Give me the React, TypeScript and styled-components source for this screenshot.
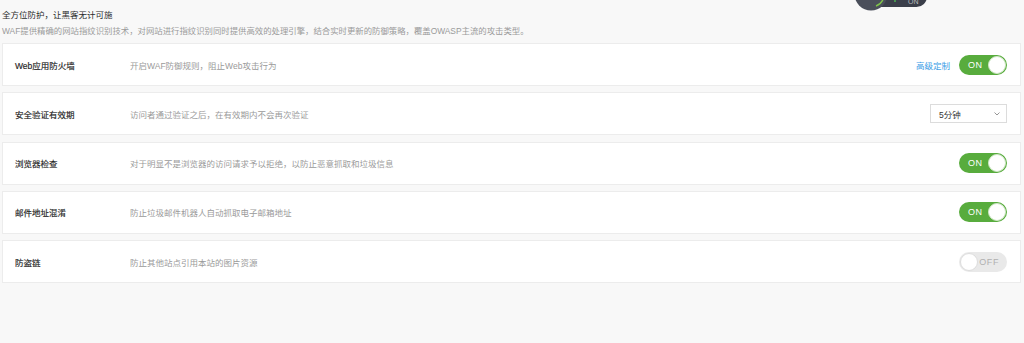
import React from 'react';
import styled, {createGlobalStyle} from 'styled-components';

const colors = {
    page: '#f8f8f8',
    card: '#ffffff',
    cardBorder: '#ececec',
    title: '#333333',
    muted: '#9a9a9a',
    link: '#3b9de6',
    green: '#58ac3d',
    offTrack: '#e9e9e9',
    offText: '#b0b0b0',
};

const GlobalStyle = createGlobalStyle`
  html, body {
    margin: 0;
    padding: 0;
    background: ${colors.page};
  }
  body {
    font-family: "Liberation Sans", "Noto Sans CJK SC", sans-serif;
    color: ${colors.title};
  }
`;

interface Rule {
    name: string
    desc: string
    control: 'toggle' | 'select'
    on?: boolean
    link?: string
    value?: string
}

const rules: Rule[] = [
    {name: 'Web应用防火墙', desc: '开启WAF防御规则，阻止Web攻击行为', control: 'toggle', on: true, link: '高级定制'},
    {name: '安全验证有效期', desc: '访问者通过验证之后，在有效期内不会再次验证', control: 'select', value: '5分钟'},
    {name: '浏览器检查', desc: '对于明显不是浏览器的访问请求予以拒绝，以防止恶意抓取和垃圾信息', control: 'toggle', on: true},
    {name: '邮件地址混淆', desc: '防止垃圾邮件机器人自动抓取电子邮箱地址', control: 'toggle', on: true},
    {name: '防盗链', desc: '防止其他站点引用本站的图片资源', control: 'toggle', on: false},
];

// cut-off illustration peeking in at the top edge
const Knob: React.FC = () => (
    <KnobArt width="90" height="12" viewBox="0 0 90 12">
        <rect x="20" y="-14" width="62" height="21" rx="10.5" fill="#3b3f4a"/>
        <circle cx="26" cy="-6" r="16.5" fill="#4a4e5a"/>
        <path d="M39 -6 A13 13 0 0 1 31 6" stroke="#7fc24a" strokeWidth="1.4" fill="none"/>
        <circle cx="50" cy="1" r="1" fill="#4caf50"/>
        <text x="63" y="4" fontSize="7" fill="#bdbdbd" fontFamily="Liberation Sans, sans-serif">ON</text>
    </KnobArt>
);

const Toggle: React.FC<{ on: boolean }> = ({on}) => (
    <Switch on={on}>
        <SwitchLabel on={on}>{on ? 'ON' : 'OFF'}</SwitchLabel>
        <SwitchDot on={on}/>
    </Switch>
);

export default function App() {
    return (
        <>
            <GlobalStyle/>
            <Page>
                <Header>
                    <Heading>全方位防护，让黑客无计可施</Heading>
                    <Lead>WAF提供精确的网站指纹识别技术，对网站进行指纹识别同时提供高效的处理引擎，结合实时更新的防御策略，覆盖OWASP主流的攻击类型。</Lead>
                    <Knob/>
                </Header>
                <List>
                    {rules.map(rule => (
                        <Card key={rule.name}>
                            <RuleName>{rule.name}</RuleName>
                            <RuleDesc>{rule.desc}</RuleDesc>
                            <Controls>
                                {rule.link && <Link>{rule.link}</Link>}
                                {rule.control === 'toggle'
                                    ? <Toggle on={!!rule.on}/>
                                    : (
                                        <Select>
                                            <span>{rule.value}</span>
                                            <Chevron width="6" height="4" viewBox="0 0 6 4">
                                                <path d="M0.5 0.5 L3 3 L5.5 0.5" stroke="#8a8a8a" strokeWidth="0.9" fill="none"/>
                                            </Chevron>
                                        </Select>
                                    )}
                            </Controls>
                        </Card>
                    ))}
                </List>
            </Page>
        </>
    );
}

const Page = styled.div`
  width: 1024px;
  height: 343px;
  padding: 0 3px 0 2px;
  box-sizing: border-box;
  overflow: hidden;
`;

const Header = styled.header`
  position: relative;
  display: flex;
  flex-direction: column;
  padding-top: 10px;
  height: 43px;
  box-sizing: border-box;
`;

const Heading = styled.div`
  font-size: 8.5px;
  line-height: 11px;
  color: #2b2b2b;
`;

const Lead = styled.div`
  margin-top: 5px;
  font-size: 8.4px;
  line-height: 11px;
  color: ${colors.muted};
`;

const KnobArt = styled.svg`
  position: absolute;
  top: 0;
  left: 843px;
`;

const List = styled.div`
  display: flex;
  flex-direction: column;
  gap: 6.25px;
`;

const Card = styled.div`
  display: flex;
  align-items: center;
  height: 43px;
  box-sizing: border-box;
  padding: 0 13px 0 12px;
  background: ${colors.card};
  border: 1px solid ${colors.cardBorder};
`;

const RuleName = styled.div`
  width: 115px;
  flex-shrink: 0;
  font-size: 8.5px;
  color: #222;
  -webkit-text-stroke: 0.15px #222;
`;

const RuleDesc = styled.div`
  flex: 1;
  font-size: 8.5px;
  color: ${colors.muted};
`;

const Controls = styled.div`
  display: flex;
  align-items: center;
  gap: 9px;
`;

const Link = styled.span`
  font-size: 8.5px;
  color: ${colors.link};
  cursor: pointer;
`;

const Switch = styled.div<{ on: boolean }>`
  position: relative;
  display: flex;
  align-items: center;
  justify-content: ${p => p.on ? 'flex-start' : 'flex-end'};
  width: 48px;
  height: 20px;
  box-sizing: border-box;
  padding: 0 8px;
  border-radius: 10px;
  background: ${p => p.on ? colors.green : colors.offTrack};
`;

const SwitchLabel = styled.span<{ on: boolean }>`
  font-size: 9px;
  letter-spacing: 0.6px;
  color: ${p => p.on ? '#ffffff' : colors.offText};
  margin-left: ${p => p.on ? '1px' : '0'};
`;

const SwitchDot = styled.span<{ on: boolean }>`
  position: absolute;
  top: 1px;
  ${p => p.on ? 'right: 1px;' : 'left: 1px;'}
  width: 18px;
  height: 18px;
  box-sizing: border-box;
  border-radius: 50%;
  background: #fff;
  border: 1px solid ${p => p.on ? '#cfe6c6' : '#dddddd'};
`;

const Select = styled.div`
  display: flex;
  align-items: center;
  justify-content: space-between;
  width: 77px;
  height: 19px;
  box-sizing: border-box;
  padding: 0 6px 0 8px;
  border: 1px solid #dcdcdc;
  background: #fff;
  font-size: 8.5px;
  color: ${colors.title};
`;

const Chevron = styled.svg`
  display: block;
`;
